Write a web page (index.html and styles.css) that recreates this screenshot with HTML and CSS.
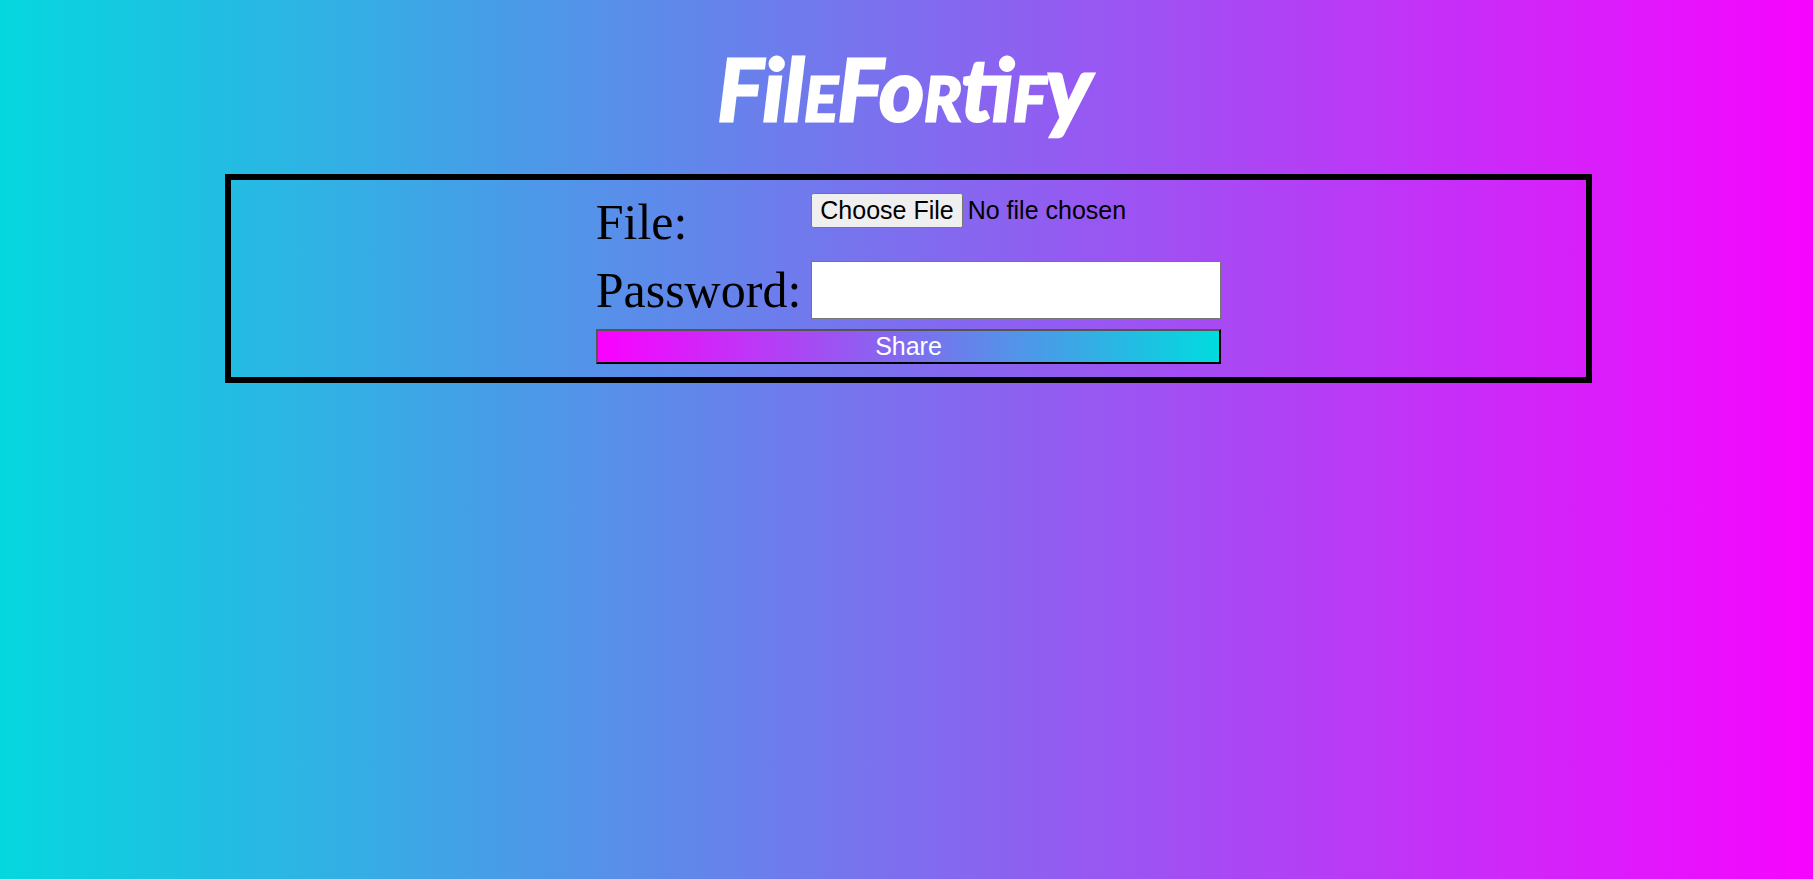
FILE: index.html
```html
<!DOCTYPE html>
<html lang="en">
<head>
<meta charset="utf-8">
<title>FileFortify</title>
<link rel="stylesheet" href="styles.css">
</head>
<body>
<header class="header">
<h1 class="logo">Fil<span class="logo-small">e</span>Fo<span class="logo-small">r</span>ti<span class="logo-small">f</span><span class="logo-tail">y</span></h1>
</header>
<main class="panel">
<form class="share-form">
<label class="label" for="file">File:</label>
<input class="file" type="file" id="file" name="file">
<label class="label" for="password">Password:</label>
<input class="password" type="password" id="password" name="password">
<button class="share" type="submit">Share</button>
</form>
</main>
</body>
</html>
```

FILE: styles.css
```css
* {
  box-sizing: border-box;
}

body {
  margin: 0;
  padding-left: 4px;
  min-height: 100vh;
  font-family: "Liberation Serif", "Times New Roman", serif;
  background: linear-gradient(to right, #00dbde -2%, #fc00ff 102%);
}

.header {
  padding: 34px 8px 32px 0;
  text-align: center;
}

.logo {
  margin: 0;
  font-family: Lato, sans-serif;
  font-size: 86px;
  font-style: italic;
  font-weight: 700;
  line-height: 108px;
  color: #fff;
  -webkit-text-stroke: 3px #fff;
}

.logo-small {
  font-size: 62px;
  line-height: 1;
  text-transform: uppercase;
}

.logo-tail {
  font-size: 92px;
  line-height: 1;
}

.panel {
  width: 75.6%;
  margin: 0 auto;
  padding: 13px;
  border: 6px solid #000;
}

.share-form {
  display: grid;
  grid-template-columns: auto 410px;
  justify-content: center;
  gap: 10px;
}

.label {
  font-size: 50px;
  line-height: 58px;
}

.file {
  align-self: start;
  width: 100%;
  font-family: "Liberation Sans", Arial, sans-serif;
  font-size: 25px;
}

.file::file-selector-button {
  margin-right: 5px;
  padding: 1px 7px;
  font: inherit;
}

.password {
  width: 100%;
  height: 58px;
  font-size: 48px;
  border: 1px solid #767676;
  background: #fff;
}

.share {
  grid-column: 1 / -1;
  padding: 1px 6px;
  font-family: "Liberation Sans", Arial, sans-serif;
  font-size: 25px;
  line-height: 29px;
  color: #fff;
  border: 2px outset #000;
  background: linear-gradient(to left, #00dbde, #fc00ff);
}
```
